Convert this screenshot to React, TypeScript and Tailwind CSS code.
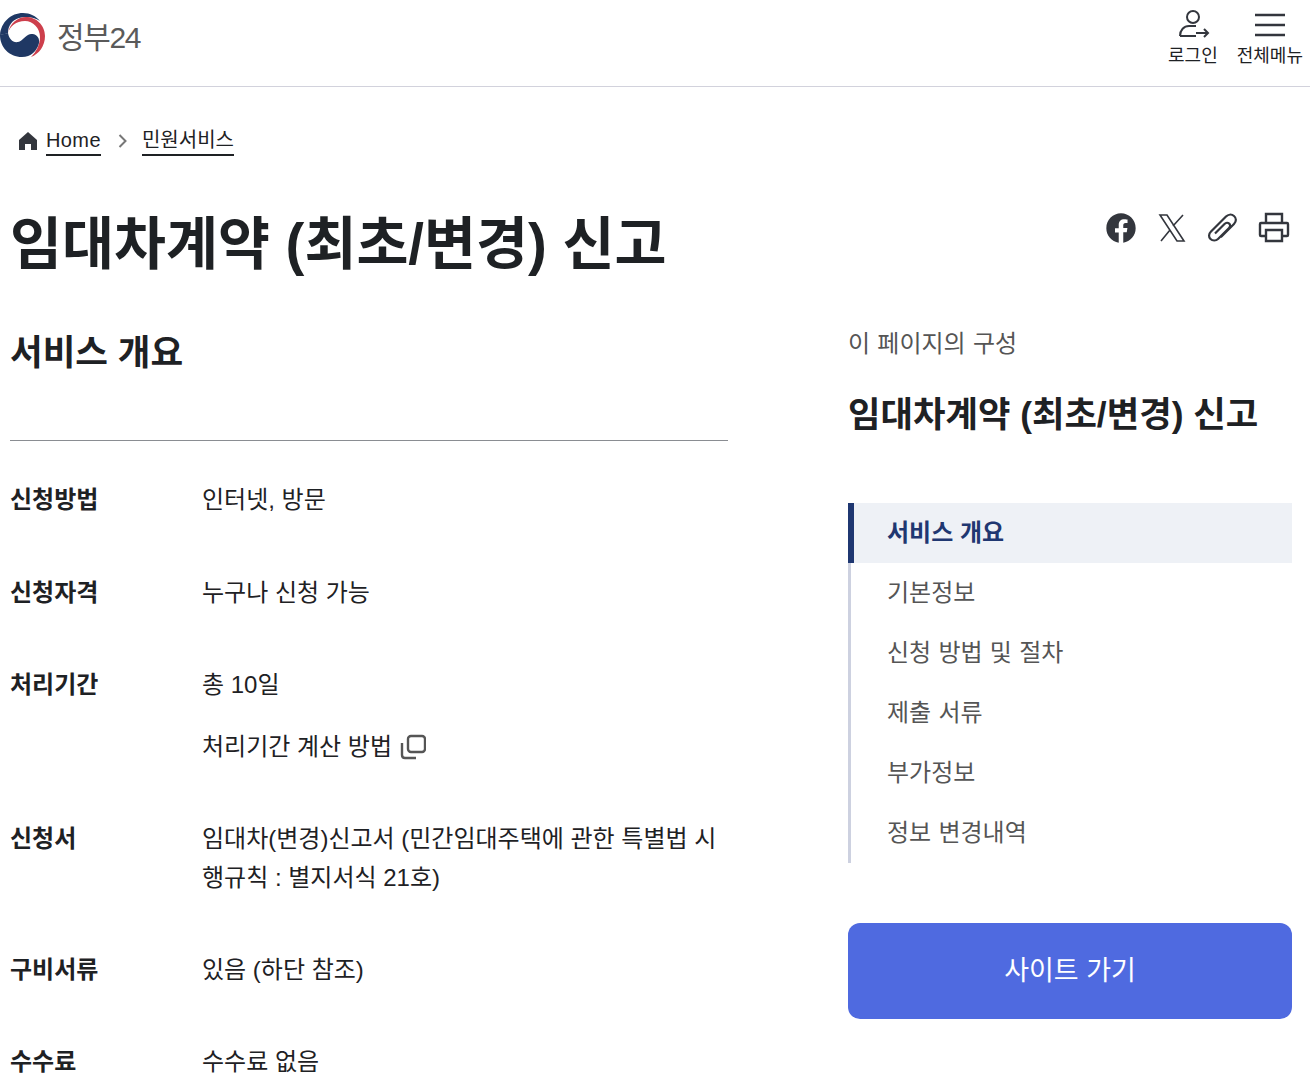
import React from "react";

const font = "font-['Liberation_Sans','Noto_Sans_CJK_KR',sans-serif]";

const Logo: React.FC = () => (
  <svg width="46" height="46" viewBox="0 0 46 46" className="shrink-0">
    <path d="M0 22C1 9 11 0 23 0c7 0 13 3 17 8-6-4-14-5-21-3C12 7 8 13 8 20c-3 1-6 2-8 2z" fill="#1f3864" />
    <path d="M8 20C10 10 18 4 26 4c10 0 19 8 19 19 0 10-6 18-14 21 5-5 9-12 9-20C40 15 33 8 25 8 16 8 10 13 8 20z" fill="#cd3f4c" />
    <path d="M0 22l8-2c1 6 5 10 10 9 5-1 7-7 13-8 6-1 9 5 8 9-2 8-8 14-17 14C9 44 0 34 0 22z" fill="#1f3864" />
  </svg>
);

const Header: React.FC = () => (
  <header className="h-[87px] border-b border-[#d2d2dc] flex flex-row justify-between">
    <div className="flex flex-row items-start pt-[13px] gap-[11px]">
      <Logo />
      <span className="mt-[2px] text-[30px] leading-[46px] text-[#5a5a5a] tracking-[-1.400px]">정부24</span>
    </div>
    <div className="flex flex-row pr-[7px] pt-[8px] gap-[19px]">
      <div className="flex flex-col items-center">
        <svg width="34" height="35" viewBox="0 0 34 35" fill="none" stroke="#33363d" strokeWidth="2">
          <circle cx="17" cy="9" r="6" />
          <path d="M4 28c0-6 4-10 9-10h7M4 28h16" />
          <path d="M20 25h12M28 21l4 4-4 4" />
        </svg>
        <span className="mt-[1px] text-[18px] leading-[24px] text-[#1e2124]">로그인</span>
      </div>
      <div className="flex flex-col items-center">
        <svg width="32" height="35" viewBox="0 0 32 35" fill="none" stroke="#33363d" strokeWidth="2.500">
          <path d="M1 7h30M1 17h30M1 27h30" />
        </svg>
        <span className="mt-[1px] text-[18px] leading-[24px] text-[#1e2124]">전체메뉴</span>
      </div>
    </div>
  </header>
);

const Breadcrumb: React.FC = () => (
  <div className="flex flex-row items-center pl-[18px] pt-[38px] h-[70px]">
    <svg width="20" height="20" viewBox="0 0 20 20" fill="#33363d">
      <path d="M10 1 1 9v10h6v-6h6v6h6V9z" />
    </svg>
    <span className="ml-[8px] border-b-2 border-[#1e2124] text-[20px] leading-[28px] text-[#1e2124] tracking-[0.4px]">Home</span>
    <svg width="10" height="16" viewBox="0 0 10 16" fill="none" stroke="#777" strokeWidth="2" className="ml-[17px]">
      <path d="m1.500 2 6 6-6 6" />
    </svg>
    <span className="ml-[14px] border-b-2 border-[#1e2124] text-[20px] leading-[28px] text-[#1e2124]">민원서비스</span>
  </div>
);

const ShareIcons: React.FC = () => (
  <div className="flex flex-row items-start gap-[19px] pt-[55px] pr-[20px]">
    <svg width="32" height="32" viewBox="0 0 24 24" fill="#33363d">
      <path d="M23 12.100C23 6 18 1 12 1S1 6 1 12.100c0 5.500 4 10 9.300 10.900v-7.700H7.500v-3.200h2.800V9.700c0-2.800 1.600-4.300 4.200-4.300 1.200 0 2.400.2 2.400.2v2.700h-1.400c-1.400 0-1.800.9-1.800 1.700v2h3.100l-.5 3.200h-2.600V23C19 22.100 23 17.600 23 12.100z" />
    </svg>
    <svg width="32" height="32" viewBox="0 0 32 32" fill="none" stroke="#33363d" strokeWidth="1.600">
      <path d="M4 3h7l17 26h-7zM27 3 17 14M14 18 5 29" />
    </svg>
    <svg width="32" height="32" viewBox="0 0 32 32" fill="none" stroke="#33363d" strokeWidth="2.200">
      <path d="M14 25 27 12c2.500-2.500 2.500-6 0-8s-6-1.500-8 .5l-15 15c-2.500 2.500-2.500 5.500-.5 7.500s5.500 2 7.500 0l11-11c1.500-1.500 1.500-3.500 0-4.500-1-1-3-1-4.500.5L8 21.500" />
    </svg>
    <svg width="32" height="32" viewBox="0 0 32 32" fill="none" stroke="#33363d" strokeWidth="2.400">
      <path d="M8 11V2h16v9M8 24H3a1 1 0 0 1-1-1V12a1 1 0 0 1 1-1h26a1 1 0 0 1 1 1v11a1 1 0 0 1-1 1h-5" />
      <path d="M8 18h16v11H8z" />
    </svg>
  </div>
);

const Row: React.FC<{ label: string; mb?: string; children: React.ReactNode }> = ({ label, children, mb }) => (
  <div className={"flex flex-row " + (mb ?? "mb-[53px]")}>
    <div className="w-[192px] text-[24px] leading-[39px] font-bold text-[#1e2124]">{label}</div>
    <div className="flex-1 text-[24px] leading-[39px] text-[#1e2124]">{children}</div>
  </div>
);

const navItems = ["기본정보", "신청 방법 및 절차", "제출 서류", "부가정보", "정보 변경내역"];

const PageNav: React.FC = () => (
  <ul className="mt-[62px] border-l-[3px] border-[#cdd1e0]">
    <li className="-ml-[3px] h-[60px] pl-[33px] border-l-[6px] border-[#1f3771] bg-[#eef1f6] flex items-center text-[24px] font-bold text-[#1f3771]">
      서비스 개요
    </li>
    {navItems.map((item) => (
      <li key={item} className="h-[60px] pl-[36px] flex items-center text-[24px] text-[#555] [word-spacing:0.6px]">
        {item}
      </li>
    ))}
  </ul>
);

export default function App() {
  return (
    <div className={font + " h-[1087px] overflow-hidden bg-white"}>
      <Header />
      <Breadcrumb />
      <div className="flex flex-row justify-between">
        <h1 className="pl-[10px] pt-[45px] text-[56.500px] leading-[86px] font-bold text-[#1e2124]">
          임대차계약 (최초/변경) 신고
        </h1>
        <ShareIcons />
      </div>
      <div className="flex flex-row pl-[10px] pr-[18px] mt-[39px] justify-between">
        <main className="w-[718px]">
          <h2 className="text-[35.500px] leading-[52px] font-bold text-[#1e2124]">서비스 개요</h2>
          <div className="mt-[61px] mb-[39px] border-t border-[#8a8d92]" />
          <Row label="신청방법" mb="mb-[54px]">인터넷, 방문</Row>
          <Row label="신청자격">누구나 신청 가능</Row>
          <Row label="처리기간">
            <p className="mb-[23px]">총 10일</p>
            <p className="flex flex-row items-center gap-[8px]">
              처리기간 계산 방법
              <svg width="26" height="26" viewBox="0 0 26 26" fill="none" stroke="#555" strokeWidth="2.400">
                <rect x="8" y="2" width="17" height="16" rx="3" />
                <path d="M2 9v12c0 2 1 3 3 3h11" />
              </svg>
            </p>
          </Row>
          <Row label="신청서">임대차(변경)신고서 (민간임대주택에 관한 특별법 시행규칙 : 별지서식 21호)</Row>
          <Row label="구비서류">있음 (하단 참조)</Row>
          <Row label="수수료" mb="mb-0">수수료 없음</Row>
        </main>
        <aside className="w-[444px]">
          <p className="text-[24px] leading-[34px] text-[#555] [word-spacing:0.6px]">이 페이지의 구성</p>
          <h3 className="mt-[28px] text-[35.300px] leading-[52px] font-bold text-[#1e2124]">
            임대차계약 (최초/변경) 신고
          </h3>
          <PageNav />
          <button className="mt-[60px] w-full h-[96px] rounded-[12px] bg-[#4f6ae0] text-white text-[27px]">
            사이트 가기
          </button>
        </aside>
      </div>
    </div>
  );
}
